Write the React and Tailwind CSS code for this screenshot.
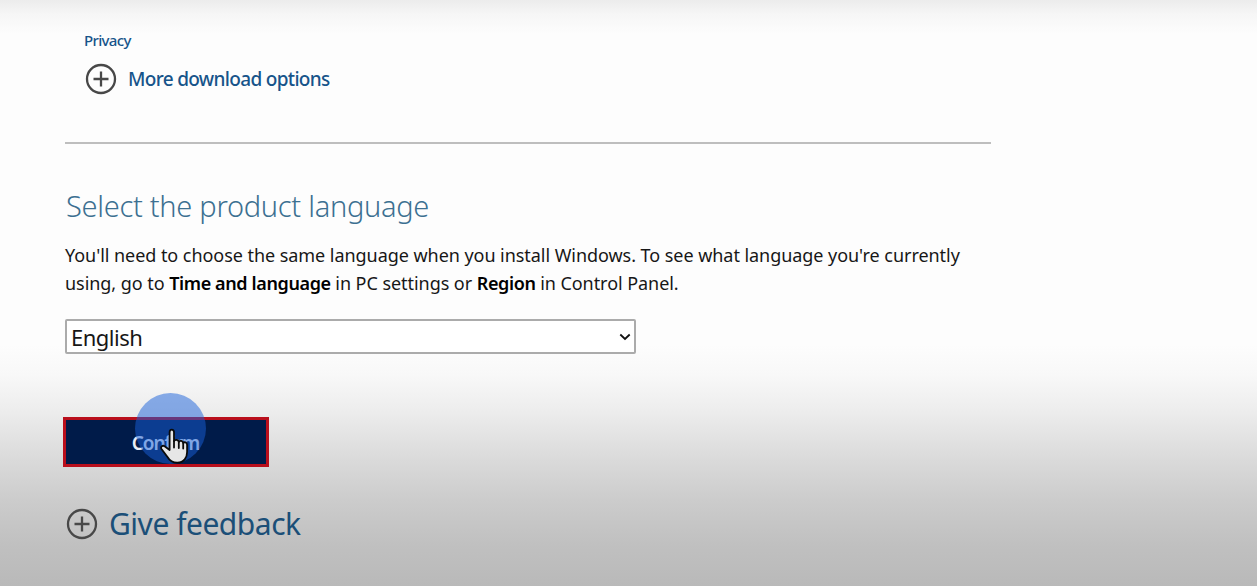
import React, { useState } from 'react';

function PlusCircle() {
    return (
        <svg className="w-8 h-8 shrink-0 text-[#484848]" viewBox="0 0 32 32" fill="none" stroke="currentColor" strokeWidth="2.3">
            <circle cx="16" cy="16" r="14" />
            <path d="M16 8.5v15M8.5 16h15" />
        </svg>
    );
}

function HandCursor() {
    return (
        <svg className="absolute left-[97px] top-[11px] w-[30px] h-[37px]" viewBox="0 0 30 37" fill="#e6e6e6" stroke="#0a0a0a" strokeWidth="1.8" strokeLinejoin="round" strokeLinecap="round">
            <path d="M9.6 22V4.2C9.6 2.4 10.6 1.6 11.7 1.6S14 2.4 14 4.2v9C14.500 11.300 18.600 11.300 18.800 14C19.500 12.200 23 12.500 23.200 15C24 13.700 27.100 14 27.100 16.800V24C27.100 29.500 24 34.700 17.300 34.700C12 34.700 9.500 32.500 7.500 29L1.500 21C.2 18.600 2.600 17 4.600 18.200z" />
            <path d="M14 13v6.500M18.800 14v6M23.200 15v5.500" />
        </svg>
    );
}

function App() {
    const [language, setLanguage] = useState('English');

    return (
        <div className="h-[586px] w-full overflow-hidden bg-[linear-gradient(180deg,#ececec_0px,#f6f6f6_14px,#fdfdfd_34px,#fdfdfd_345px,#f8f8f8_375px,#ededed_410px,#dadada_460px,#cccccc_500px,#c0c0c0_545px,#b9b9b9_586px)] font-['Noto_Sans',sans-serif] text-[#171717]">
            <main className="ml-[65px] w-[926px] pt-[30px]">
                <div className="pl-[19px]">
                    <a href="#privacy" className="block w-fit text-[15px] leading-[21px] font-medium tracking-[-0.65px] text-[#17548a]">Privacy</a>
                    <a href="#options" className="mt-3 flex w-fit items-center gap-[11px] pl-px text-[19px] leading-8 font-medium tracking-[-0.67px] text-[#17548a]">
                        <PlusCircle />
                        <span>More download options</span>
                    </a>
                </div>

                <hr className="mt-[47px] border-t-2 border-[#bebebe]" />

                <h2 className="mt-[42px] w-fit pl-px text-[29px] leading-10 font-light tracking-[-0.29px] text-[#3c7091]">
                    <span>Select the product language</span>
                </h2>

                <p className="mt-[15px] text-[18px] leading-7 tracking-[-0.05px] whitespace-nowrap">
                    <span>You'll need to choose the same language when you install Windows. To see what language you're currently</span>
                    <br />
                    <span>using, go to <b className="font-semibold tracking-[-0.38px] text-black">Time and language</b> in PC settings or <b className="font-semibold tracking-[-0.38px] text-black">Region</b> in Control Panel.</span>
                </p>

                <div className="relative mt-[22px] h-[35px] w-[571px]">
                    <select value={language} onChange={(e) => setLanguage(e.target.value)} className="h-full w-full appearance-none rounded-xs border-2 border-[#ababab] bg-white pl-1 text-[22px] leading-7 tracking-[-0.5px] outline-none">
                        <option value="English">English</option>
                    </select>
                    <svg className="absolute right-[5px] top-[14px] h-2 w-3" viewBox="0 0 12 8" fill="none" stroke="#111" strokeWidth="1.8">
                        <path d="M1.300 1.500L6 6L10.700 1.500" />
                    </svg>
                </div>

                <div className="relative mt-[63px] -ml-[2px] h-[50px] w-[206px]">
                    <button type="button" className="h-full w-full border-3 border-[#b90f1c] bg-[#001b49] pt-[3px] pr-px text-[19px] font-semibold tracking-[-1.05px] text-[#e9edf4]">
                        Confirm
                    </button>
                    <div className="absolute left-[72px] -top-[24px] h-[71px] w-[71px] rounded-full bg-[#1760da]/50" />
                    <HandCursor />
                </div>

                <a href="#feedback" className="mt-[35px] flex w-fit items-center gap-[11px] pl-px text-[30px] leading-[42px] tracking-[-0.48px] text-[#1b4f78]">
                    <PlusCircle />
                    <span className="pt-px">Give feedback</span>
                </a>
            </main>
        </div>
    );
}

export default App;
